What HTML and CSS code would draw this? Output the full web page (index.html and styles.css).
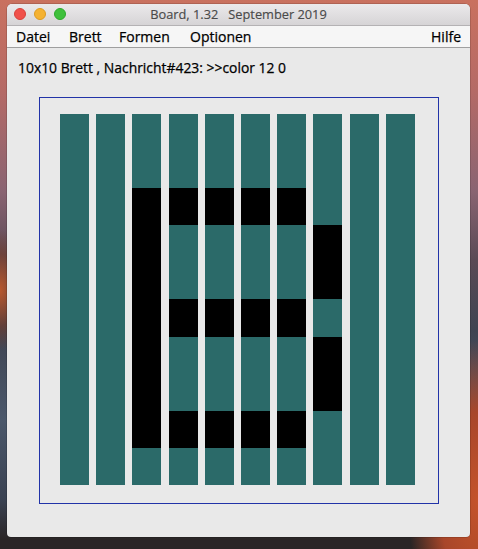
FILE: index.html
```html
<!DOCTYPE html>
<html>
<head>
<meta charset="utf-8">
<link rel="stylesheet" href="styles.css">
</head>
<body>
<div class="window">
  <div class="titlebar">
    <div class="lights">
      <span class="light red"></span>
      <span class="light yellow"></span>
      <span class="light green"></span>
    </div>
    <div class="title">Board, 1.32&nbsp;&nbsp;&nbsp;September 2019</div>
  </div>
  <div class="menubar">
    <span class="menu m-datei">Datei</span>
    <span class="menu m-brett">Brett</span>
    <span class="menu m-formen">Formen</span>
    <span class="menu m-optionen">Optionen</span>
    <span class="menu m-hilfe">Hilfe</span>
  </div>
  <div class="content">
    <div class="info">10x10 Brett , Nachricht#423: &gt;&gt;color 12 0</div>
    <div class="board">
      <div class="grid">
        <!-- row 0 -->
        <i></i><i></i><i></i><i></i><i></i><i></i><i></i><i></i><i></i><i></i>
        <!-- row 1 -->
        <i></i><i></i><i></i><i></i><i></i><i></i><i></i><i></i><i></i><i></i>
        <!-- row 2 -->
        <i></i><i></i><i class="b"></i><i class="b"></i><i class="b"></i><i class="b"></i><i class="b"></i><i></i><i></i><i></i>
        <!-- row 3 -->
        <i></i><i></i><i class="b"></i><i></i><i></i><i></i><i></i><i class="b"></i><i></i><i></i>
        <!-- row 4 -->
        <i></i><i></i><i class="b"></i><i></i><i></i><i></i><i></i><i class="b"></i><i></i><i></i>
        <!-- row 5 -->
        <i></i><i></i><i class="b"></i><i class="b"></i><i class="b"></i><i class="b"></i><i class="b"></i><i></i><i></i><i></i>
        <!-- row 6 -->
        <i></i><i></i><i class="b"></i><i></i><i></i><i></i><i></i><i class="b"></i><i></i><i></i>
        <!-- row 7 -->
        <i></i><i></i><i class="b"></i><i></i><i></i><i></i><i></i><i class="b"></i><i></i><i></i>
        <!-- row 8 -->
        <i></i><i></i><i class="b"></i><i class="b"></i><i class="b"></i><i class="b"></i><i class="b"></i><i></i><i></i><i></i>
        <!-- row 9 -->
        <i></i><i></i><i></i><i></i><i></i><i></i><i></i><i></i><i></i><i></i>
      </div>
    </div>
  </div>
</div>
</body>
</html>
```

FILE: styles.css
```css
html, body {
  margin: 0;
  padding: 0;
}
body {
  width: 478px;
  height: 549px;
  overflow: hidden;
  background:
    radial-gradient(ellipse 70px 160px at 478px 500px, #c4532a 0%, #a8462a 55%, rgba(168,70,42,0) 100%),
    radial-gradient(ellipse 30px 60px at 0px 290px, #b8582e 0%, rgba(120,60,40,0.6) 60%, rgba(80,50,50,0) 100%),
    linear-gradient(180deg, #c9715f 0px, #b56a66 90px, #8a6472 190px, #5a4a55 260px, #3f4452 330px, #4b586b 420px, #3a4252 500px, #2a2526 540px);
  font-family: "Open Sans", "DejaVu Sans", sans-serif;
}
.window {
  margin: 4px 0 0 7px;
  width: 463px;
  height: 533px;
  background: #e9e9e9;
  border-radius: 5px 5px 4px 4px;
  overflow: hidden;
  box-shadow: 0 0 0 0.5px rgba(0,0,0,0.25);
  display: flex;
  flex-direction: column;
}
.titlebar {
  height: 21px;
  background: linear-gradient(180deg, #ebe9eb 0%, #d6d4d6 100%);
  border-bottom: 1px solid #b4b2b4;
  display: flex;
  align-items: center;
  position: relative;
}
.lights {
  position: absolute;
  left: 7px;
  top: 4px;
  display: flex;
  gap: 8px;
}
.light {
  width: 12px;
  height: 12px;
  border-radius: 50%;
  box-sizing: border-box;
}
.red { background: #f0504a; border: 0.5px solid #d8403a; }
.yellow { background: #f5b232; border: 0.5px solid #dc9a22; }
.green { background: #3fc03c; border: 0.5px solid #2ea82c; }
.title {
  flex: 1;
  text-align: center;
  font-size: 12.8px;
  color: #4a4a4a;
  line-height: 21px;
  -webkit-text-stroke: 0.15px #4a4a4a;
}
.menubar {
  height: 21px;
  background: #f6f6f6;
  border-bottom: 1px solid #9f9f9f;
  display: flex;
  align-items: center;
  padding: 0 9px;
  font-size: 14px;
  color: #000;
  -webkit-text-stroke: 0.25px #000;
}
.menu { display: inline-block; line-height: 21px; }
.m-datei { width: 53px; }
.m-brett { width: 50px; }
.m-formen { width: 71px; }
.m-hilfe { margin-left: auto; }
.content {
  flex: 1;
  padding: 0 0 0 11px;
}
.info {
  font-size: 13.9px;
  color: #000;
  margin-top: 10px;
  height: 20px;
  line-height: 20px;
  -webkit-text-stroke: 0.25px #000;
}
.board {
  margin: 19px 0 0 21px;
  width: 378px;
  height: 389px;
  border: 1px solid #2233a8;
  padding: 16px 0 0 20px;
  box-sizing: content-box;
}
.grid {
  display: grid;
  grid-template-columns: repeat(10, 29px);
  grid-auto-rows: 37.1px;
  column-gap: 7.2px;
  row-gap: 0;
}
.grid i {
  display: block;
  background: #2b6a69;
}
.grid i.b {
  background: #000;
}
```
